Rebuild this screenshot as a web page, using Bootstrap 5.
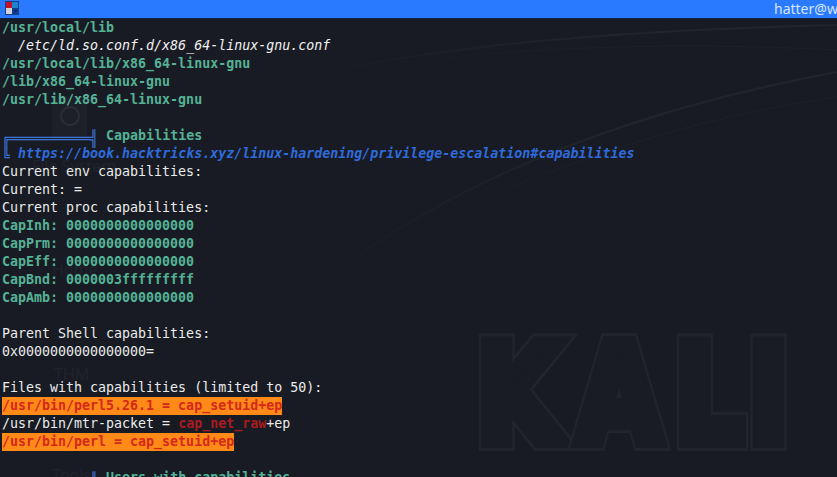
<!DOCTYPE html>
<html lang="en">
<head>
<meta charset="utf-8">
<title>Terminal</title>
<link href="https://cdn.jsdelivr.net/npm/bootstrap@5.3.0/dist/css/bootstrap.min.css" rel="stylesheet">
<style>
html,body{height:477px;overflow:hidden;background:#181b23;}
.term-window{height:477px;width:837px;position:relative;overflow:hidden;background:#181b23;}
.title-strip{height:18px;background:#2a7aff;color:#d5e4ff;font:14px/18px "Noto Sans",sans-serif;position:relative;z-index:2;box-shadow:0 1px #12264a;}
.title-icon{width:14px;height:14px;margin:1px 0 0 5px;display:block;}
.title-text{width:63px;overflow:hidden;white-space:nowrap;}
.wallpaper{position:absolute;inset:0;width:837px;height:477px;}
.ghost-label{position:absolute;font:16px/18px "Noto Sans",sans-serif;color:#20232c;white-space:nowrap;}
.ghost-a{left:32px;top:157px;}
.ghost-b{left:54px;top:365px;}
.ghost-c{left:52px;top:260px;}
.ghost-d{left:52px;top:466px;}
.ghost-tile{position:absolute;left:52px;top:96px;width:35px;height:44px;background:#1e2029;}
.ghost-ring{position:absolute;left:60px;top:106px;width:20px;height:20px;border:2px solid #2c2e36;border-radius:50%;}
.logo-row{position:absolute;left:470px;top:322px;width:400px;transform:scaleX(.8);transform-origin:left top;font:700 134px/147px "DejaVu Sans",sans-serif;}
.logo-glyph{position:relative;display:block;text-align:center;color:#21242d;-webkit-text-stroke:20px #21242d;}
.logo-glyph::after{content:attr(data-glyph);position:absolute;inset:0;text-align:center;color:#191c24;-webkit-text-stroke:14px #191c24;}
.glyph-k{width:121px;}
.glyph-a{width:131px;}
.glyph-l{width:94px;}
.glyph-i{width:54px;}
.term-output{position:relative;z-index:1;margin:0;padding:1px 0 0 2px;font:500 13.3px/18px "DejaVu Sans Mono","Liberation Mono",monospace;color:#ebebeb;white-space:pre;overflow:hidden;}
.tone-teal{color:#55b296;font-weight:700;}
.tone-blue{color:#3c74dd;display:inline-block;transform:translateY(3px) scaleY(1.18);}
.tone-link{color:#2f6bdc;font-weight:700;font-style:italic;}
.tone-path{font-style:italic;color:#f2f2f2;}
.tone-hit{display:inline-block;background:#ff8a18;color:#d5281b;font-weight:700;}
.tone-red{color:#a81b1f;font-weight:700;}
</style>
</head>
<body>
<div class="term-window">
  <svg class="wallpaper" viewBox="0 0 837 477" fill="none" aria-hidden="true">
    <defs>
      <linearGradient id="fadeA" gradientUnits="userSpaceOnUse" x1="300" y1="0" x2="620" y2="0">
        <stop offset="0" stop-color="#181b23"/><stop offset="1" stop-color="#21242a"/>
      </linearGradient>
      <linearGradient id="fadeB" gradientUnits="userSpaceOnUse" x1="340" y1="0" x2="620" y2="0">
        <stop offset="0" stop-color="#181b23"/><stop offset="1" stop-color="#1d2027"/>
      </linearGradient>
    </defs>
    <path d="M300 78C440 45 620 30 837 25" stroke="url(#fadeA)" stroke-width="2"/>
    <path d="M340 70C520 45 680 42 837 50" stroke="url(#fadeB)" stroke-width="1"/>
    <path d="M338 270C480 165 660 105 837 72" stroke="url(#fadeA)" stroke-width="2"/>
    <path d="M350 268C520 170 680 120 837 97" stroke="url(#fadeB)" stroke-width="1"/>
  </svg>
  <div class="ghost-tile"></div>
  <div class="ghost-ring"></div>
  <div class="ghost-label ghost-a">File System</div>
  <div class="ghost-label ghost-c">Home</div>
  <div class="ghost-label ghost-b">THM</div>
  <div class="ghost-label ghost-d">Tools</div>
  <div class="logo-row d-flex">
    <span class="logo-glyph glyph-k" data-glyph="K">K</span>
    <span class="logo-glyph glyph-a" data-glyph="A">A</span>
    <span class="logo-glyph glyph-l" data-glyph="L">L</span>
    <span class="logo-glyph glyph-i" data-glyph="I">I</span>
  </div>

  <div class="title-strip d-flex justify-content-between">
    <svg class="title-icon" viewBox="0 0 14 14" aria-hidden="true">
      <rect width="14" height="14" fill="#123f8f"/>
      <rect x="1" y="1" width="6" height="6" fill="#c4112a"/>
      <rect x="7" y="1" width="6" height="6" fill="#1b86c9"/>
      <rect x="1" y="7" width="6" height="6" fill="#d2d2d2"/>
      <path d="M8 9h5l-2.500 3z" fill="#0b2a70"/>
    </svg>
    <div class="title-text">hatter@wpn: ~</div>
  </div>

<pre class="term-output"><span class="tone-teal">/usr/local/lib</span>
  <span class="tone-path">/etc/ld.so.conf.d/x86_64-linux-gnu.conf</span>
<span class="tone-teal">/usr/local/lib/x86_64-linux-gnu</span>
<span class="tone-teal">/lib/x86_64-linux-gnu</span>
<span class="tone-teal">/usr/lib/x86_64-linux-gnu</span>

<span class="tone-blue">╔══════════╣</span> <span class="tone-teal">Capabilities</span>
<span class="tone-blue">╚</span> <span class="tone-link">https://book.hacktricks.xyz/linux-hardening/privilege-escalation#capabilities</span>
Current env capabilities:
Current: =
Current proc capabilities:
<span class="tone-teal">CapInh: 0000000000000000</span>
<span class="tone-teal">CapPrm: 0000000000000000</span>
<span class="tone-teal">CapEff: 0000000000000000</span>
<span class="tone-teal">CapBnd: 0000003fffffffff</span>
<span class="tone-teal">CapAmb: 0000000000000000</span>

Parent Shell capabilities:
0x0000000000000000=

Files with capabilities (limited to 50):
<span class="tone-hit">/usr/bin/perl5.26.1 = cap_setuid+ep</span>
/usr/bin/mtr-packet = <span class="tone-red">cap_net_raw</span>+ep
<span class="tone-hit">/usr/bin/perl = cap_setuid+ep</span>

<span class="tone-blue">╔══════════╣</span> <span class="tone-teal">Users with capabilities</span></pre>
</div>
<script src="https://cdn.jsdelivr.net/npm/bootstrap@5.3.0/dist/js/bootstrap.bundle.min.js"></script>
</body>
</html>
